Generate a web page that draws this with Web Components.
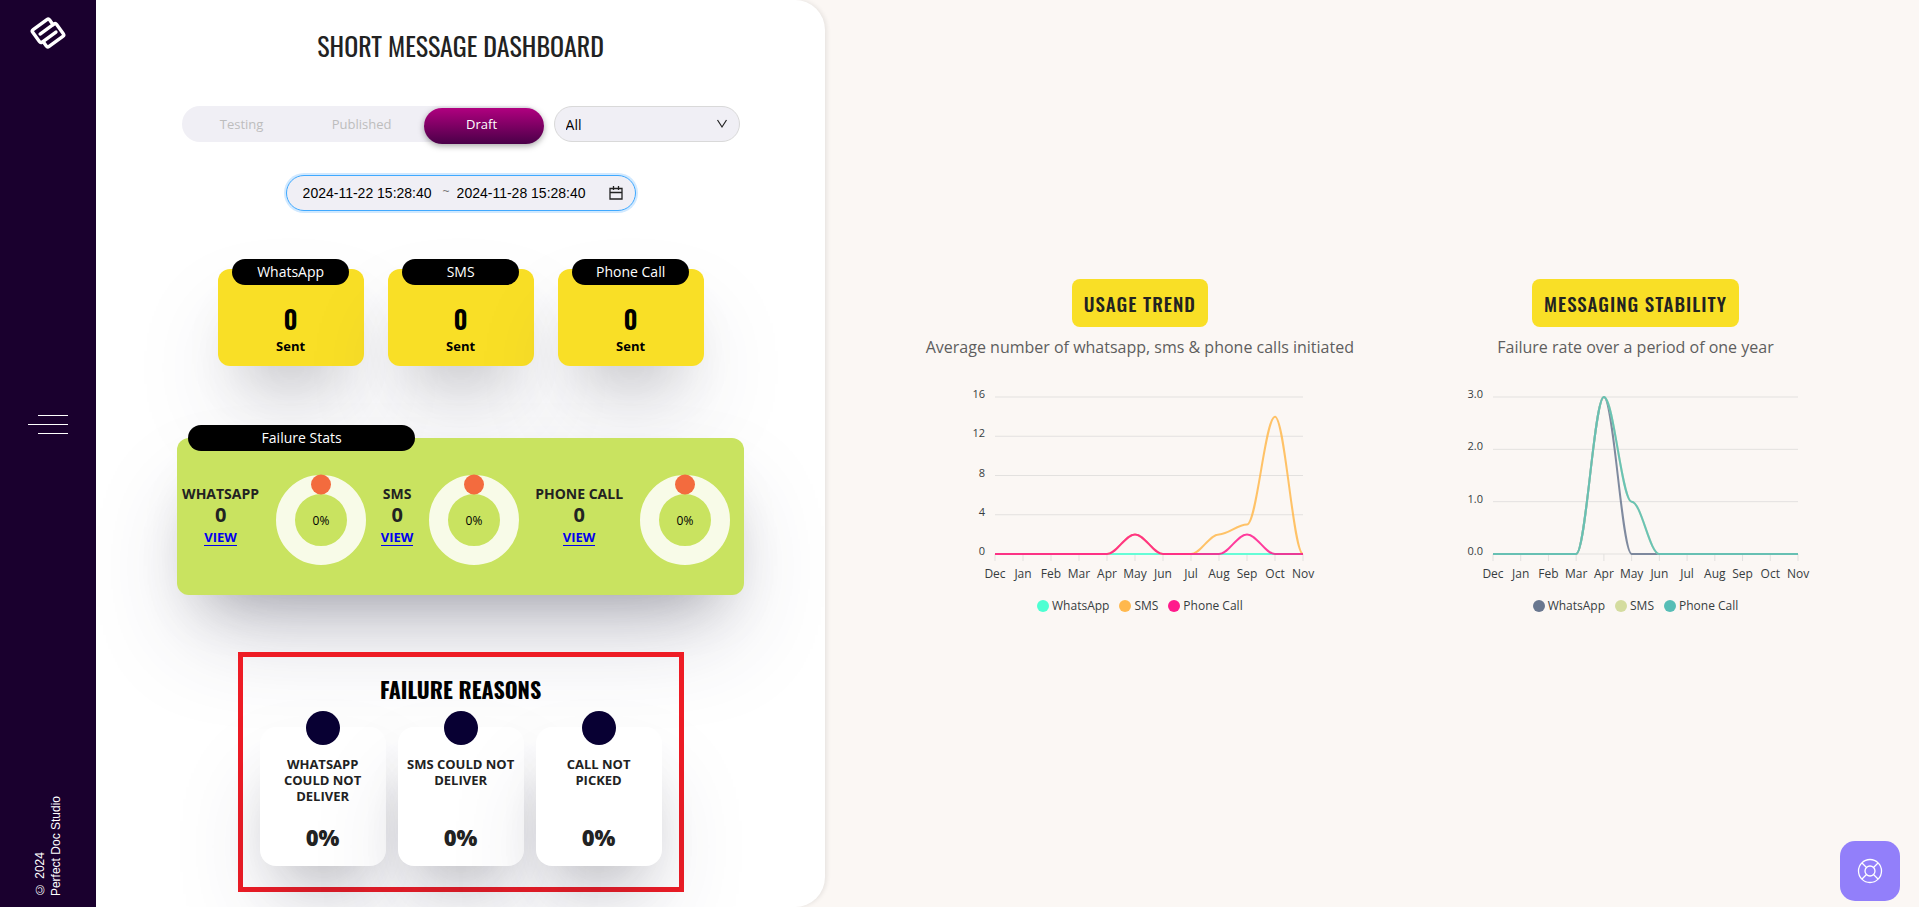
<!DOCTYPE html>
<html lang="en">
<head>
<meta charset="utf-8">
<title>Short Message Dashboard</title>
<style>
  body {
    margin: 0;
    font-family: "Open Sans", "Noto Sans", sans-serif;
    font-size: 14px;
    color: #222;
    background: #fbf7f4;
    --display: Oswald, "Liberation Sans Narrow", "Arial Narrow", "Open Sans", sans-serif;
    --yellow: #f9df26;
    --lime: #c9e360;
    --field: #f0eff5;
    --lift: 0 50px 100px -20px rgba(50, 50, 93, 0.25), 0 30px 60px -30px rgba(0, 0, 0, 0.3);
  }
</style>
</head>
<body>
<message-dashboard>
  <side-rail slot="rail"></side-rail>

  <dash-panel slot="panel" heading="SHORT MESSAGE DASHBOARD">
    <segment-tabs slot="filters" options="Testing,Published,Draft" active="Draft"></segment-tabs>
    <channel-select slot="filters"></channel-select>
    <date-range slot="dates" from="2024-11-22 15:28:40" to="2024-11-28 15:28:40"></date-range>
    <count-card slot="counts" label="WhatsApp">0</count-card>
    <count-card slot="counts" label="SMS">0</count-card>
    <count-card slot="counts" label="Phone Call">0</count-card>
    <failure-stats slot="stats" label="Failure Stats">
      <failure-stat label="WHATSAPP" count="0" percent="0"></failure-stat>
      <failure-stat label="SMS" count="0" percent="0"></failure-stat>
      <failure-stat label="PHONE CALL" count="0" percent="0"></failure-stat>
    </failure-stats>
    <failure-reasons slot="reasons" heading="FAILURE REASONS">
      <reason-card percent="0">WHATSAPP COULD NOT DELIVER</reason-card>
      <reason-card percent="0">SMS COULD NOT DELIVER</reason-card>
      <reason-card percent="0">CALL NOT PICKED</reason-card>
    </failure-reasons>
  </dash-panel>

  <trend-chart slot="charts" chart="usage" heading="USAGE TREND">Average number of whatsapp, sms &amp; phone calls initiated</trend-chart>
  <trend-chart slot="charts" chart="stability" heading="MESSAGING STABILITY">Failure rate over a period of one year</trend-chart>
  <help-button slot="help"></help-button>
</message-dashboard>

<script>
const MONTHS = ['Dec', 'Jan', 'Feb', 'Mar', 'Apr', 'May', 'Jun', 'Jul', 'Aug', 'Sep', 'Oct', 'Nov']

const CHARTS = {
  usage: {
    left: 36,
    ticks: [16, 12, 8, 4, 0],
    digits: 0,
    series: [
      { name: 'WhatsApp',   color: '#4dffd2', data: [0, 0, 0, 0, 0, 0, 0, 0, 0, 0, 0, 0] },
      { name: 'SMS',        color: '#ffb84d', data: [0, 0, 0, 0, 0, 2, 0, 0, 2, 3, 14, 0] },
      { name: 'Phone Call', color: '#ff1a8c', data: [0, 0, 0, 0, 0, 2, 0, 0, 0, 2, 0, 0] },
    ],
  },
  stability: {
    left: 39,
    ticks: [3, 2, 1, 0],
    digits: 1,
    series: [
      { name: 'WhatsApp',   color: '#69778f', data: [0, 0, 0, 0, 3, 0, 0, 0, 0, 0, 0, 0] },
      { name: 'SMS',        color: '#d4dc9f', data: [0, 0, 0, 0, 3, 1, 0, 0, 0, 0, 0, 0] },
      { name: 'Phone Call', color: '#56bdb6', data: [0, 0, 0, 0, 3, 1, 0, 0, 0, 0, 0, 0] },
    ],
  },
}

// Small base class: each element only supplies its template
class BaseElement extends HTMLElement {
  constructor() {
    super()
    this.attachShadow({ mode: 'open' })
  }

  connectedCallback() {
    this.shadowRoot.innerHTML = this.template()
  }

  attr(name) {
    return this.getAttribute(name) || ''
  }
}

customElements.define('message-dashboard', class extends BaseElement {
  template() {
    return `
      <style>
        :host {
          display: grid;
          grid-template-columns: 96px 38% 1fr;
          min-height: 100vh;
        }
        main {
          display: flex;
          align-items: center;
          justify-content: space-evenly;
          padding-right: 2px;
        }
      </style>
      <slot name="rail"></slot>
      <slot name="panel"></slot>
      <main><slot name="charts"></slot></main>
      <slot name="help"></slot>
    `
  }
})

customElements.define('side-rail', class extends BaseElement {
  template() {
    return `
      <style>
        :host {
          display: grid;
          grid-template-rows: 1fr auto 1fr;
          justify-items: center;
          background: #1a002e;
          color: #fff;
        }
        .logo {
          margin-top: 14px;
        }
        button {
          display: flex;
          flex-direction: column;
          align-items: flex-end;
          gap: 8px;
          width: 40px;
          margin-bottom: 58px;
          padding: 0;
          border: 0;
          background: none;
        }
        button span {
          width: 30px;
          height: 1px;
          background: #fff;
        }
        button span:nth-child(2) {
          width: 40px;
        }
        small {
          align-self: end;
          margin-bottom: 11px;
          writing-mode: vertical-rl;
          transform: rotate(180deg);
          font: 12px/16px "Liberation Sans", Arial, sans-serif;
        }
      </style>
      <svg class="logo" width="38" height="38" viewBox="0 0 38 38" fill="none" stroke="#fff" stroke-width="3.4" stroke-linejoin="round" stroke-linecap="round" role="img" aria-label="Perfect Doc Studio">
        <g transform="rotate(-36 19 19)">
          <path d="M12 15.200H28V9.500Q28 7.500 26 7.500H9Q7 7.500 7 9.500V20.900Q7 22.900 9 22.900H26"/>
          <path d="M28 15.200H29Q31 15.200 31 17.200V28.500Q31 30.500 29 30.500H12Q10 30.500 10 28.500V23"/>
        </g>
      </svg>
      <button type="button" aria-label="Menu"><span></span><span></span><span></span></button>
      <small>© 2024<br>Perfect Doc Studio</small>
    `
  }
})

customElements.define('dash-panel', class extends BaseElement {
  template() {
    return `
      <style>
        :host {
          display: flex;
          flex-direction: column;
          align-items: center;
          overflow: hidden;
          background: #fff;
          border-radius: 0 30px 30px 0;
          box-shadow: 2px 0 4px rgba(0, 0, 0, 0.08);
        }
        h1 {
          margin: 28px 0 0;
          font: 400 26px/36px var(--display);
        }
        .row {
          display: flex;
          justify-content: center;
        }
        .filters { gap: 12px; margin-top: 42px; }
        .dates { margin-top: 33px; }
        .counts { gap: 24px; margin-top: 58px; }
        .stats { margin-top: 72px; }
        .reasons { margin: 57px 0 15px; }
      </style>
      <h1>${this.attr('heading')}</h1>
      <div class="row filters"><slot name="filters"></slot></div>
      <div class="row dates"><slot name="dates"></slot></div>
      <div class="row counts"><slot name="counts"></slot></div>
      <div class="row stats"><slot name="stats"></slot></div>
      <div class="row reasons"><slot name="reasons"></slot></div>
    `
  }
})

customElements.define('segment-tabs', class extends BaseElement {
  template() {
    const buttons = this.attr('options').split(',').map((name) => `
      <button type="button" aria-pressed="${name === this.attr('active')}"><span>${name}</span></button>
    `).join('')
    return `
      <style>
        :host {
          display: flex;
          border-radius: 18px;
          background: var(--field);
        }
        button {
          position: relative;
          width: 120px;
          height: 36px;
          padding: 0;
          border: 0;
          background: none;
          color: #bdbdbd;
          font: inherit;
          font-size: 13px;
        }
        span {
          position: relative;
        }
        [aria-pressed="true"] {
          color: #fff;
        }
        /* raised pill behind the active label */
        [aria-pressed="true"]::before {
          content: "";
          position: absolute;
          inset: 2px -2px -2px 2px;
          border-radius: 18px;
          background: linear-gradient(#b0007f, #4a0048);
          box-shadow: 0 2px 6px rgba(0, 0, 0, 0.35);
        }
      </style>
      ${buttons}
    `
  }
})

customElements.define('channel-select', class extends BaseElement {
  template() {
    return `
      <style>
        :host {
          display: grid;
          align-items: center;
        }
        select, svg {
          grid-area: 1 / 1;
        }
        select {
          appearance: none;
          box-sizing: border-box;
          width: 186px;
          height: 36px;
          padding: 0 32px 0 11px;
          border: 1px solid #d9d9d9;
          border-radius: 18px;
          background: var(--field);
          color: #000;
          font: inherit;
        }
        svg {
          justify-self: end;
          margin-right: 12px;
          pointer-events: none;
        }
      </style>
      <select aria-label="Channel">
        <option>All</option>
      </select>
      <svg width="12" height="12" viewBox="0 0 12 12" fill="none" stroke="#222" stroke-width="1.200"><path d="M1.500 2l4.500 7 4.500-7"/></svg>
    `
  }
})

customElements.define('date-range', class extends BaseElement {
  template() {
    return `
      <style>
        :host {
          display: flex;
          align-items: center;
          box-sizing: border-box;
          width: 350px;
          height: 36px;
          padding: 0 12px 0 16px;
          border: 1px solid #40a9ff;
          border-radius: 18px;
          background: var(--field);
          box-shadow: 0 0 0 2px rgba(24, 144, 255, 0.2);
        }
        input {
          width: 136px;
          padding: 0;
          border: 0;
          background: none;
          color: #000;
          font: 14px/20px "Liberation Sans", Arial, sans-serif;
        }
        span {
          width: 18px;
          margin-top: -4px;
          color: #777;
          font: 12px/16px "Liberation Sans", Arial, sans-serif;
          text-indent: 4px;
        }
        svg {
          margin-left: auto;
        }
      </style>
      <input type="text" aria-label="From" value="${this.attr('from')}">
      <span>~</span>
      <input type="text" aria-label="To" value="${this.attr('to')}">
      <svg width="14" height="14" viewBox="0 0 14 14" fill="none" stroke="#222" stroke-width="1.300"><path d="M1 2.500h12v10.500H1zM1 6.500h12M4.500 0v4M9.500 0v4"/></svg>
    `
  }
})

customElements.define('count-card', class extends BaseElement {
  template() {
    return `
      <style>
        :host {
          display: flex;
          flex-direction: column;
          align-items: center;
          width: 146px;
          height: 97px;
          border-radius: 12px;
          background: var(--yellow);
          box-shadow: var(--lift);
          color: #000;
        }
        h2 {
          width: 117px;
          margin: -10px 0 0;
          border-radius: 13px;
          background: #000;
          color: #fff;
          font: 500 14px/26px "Open Sans", sans-serif;
          text-align: center;
        }
        b {
          margin-top: 16px;
          font: 600 26px/36px var(--display);
        }
        p {
          margin: 1px 0 0;
          font-size: 13px;
          font-weight: 700;
          line-height: 16px;
        }
      </style>
      <h2>${this.attr('label')}</h2>
      <b><slot></slot></b>
      <p>Sent</p>
    `
  }
})

customElements.define('failure-stats', class extends BaseElement {
  template() {
    return `
      <style>
        :host {
          box-sizing: border-box;
          width: 567px;
          height: 157px;
          border-radius: 12px;
          background: var(--lime);
          box-shadow: var(--lift);
        }
        h2 {
          width: 227px;
          margin: -13px 0 0 11px;
          border-radius: 13px;
          background: #000;
          color: #fff;
          font: 500 14px/26px "Open Sans", sans-serif;
          text-align: center;
        }
        div {
          display: flex;
          justify-content: space-between;
          padding: 24px 14px 0 4px;
        }
      </style>
      <h2>${this.attr('label')}</h2>
      <div><slot></slot></div>
    `
  }
})

customElements.define('failure-stat', class extends BaseElement {
  template() {
    return `
      <style>
        :host {
          display: flex;
          gap: 16px;
          text-align: center;
          font-weight: 700;
        }
        h3 {
          margin: 8px 0 0;
          padding: 0 1px;
          font-size: 14px;
          line-height: 22px;
        }
        p {
          margin: 0;
          font-size: 20px;
          line-height: 20px;
        }
        a {
          display: inline-block;
          margin-top: 4px;
          border-bottom: 1px solid;
          color: #00e;
          font-size: 13px;
          line-height: 16px;
          text-decoration: none;
        }
        svg {
          overflow: visible;
        }
        text {
          font-size: 12px;
          font-weight: 400;
          text-anchor: middle;
        }
      </style>
      <div>
        <h3>${this.attr('label')}</h3>
        <p>${this.attr('count')}</p>
        <a href="#">VIEW</a>
      </div>
      <svg width="90" height="90" viewBox="0 0 90 90">
        <circle cx="45" cy="45" r="35.500" fill="none" stroke="#f8fbe8" stroke-width="19"/>
        <circle cx="45" cy="9.500" r="10" fill="#f36b3e"/>
        <text x="45" y="50">${this.attr('percent')}%</text>
      </svg>
    `
  }
})

customElements.define('failure-reasons', class extends BaseElement {
  template() {
    return `
      <style>
        :host {
          box-sizing: border-box;
          width: 446px;
          padding: 16px 17px 21px;
          border: 5px solid #ee1c25;
        }
        h2 {
          margin: 0;
          color: #000;
          font: 700 22px/32px var(--display);
          text-align: center;
        }
        div {
          display: flex;
          gap: 12px;
          margin-top: 22px;
        }
      </style>
      <h2>${this.attr('heading')}</h2>
      <div><slot></slot></div>
    `
  }
})

customElements.define('reason-card', class extends BaseElement {
  template() {
    return `
      <style>
        :host {
          display: flex;
          flex: 1;
          flex-direction: column;
          align-items: center;
          height: 139px;
          border-radius: 16px;
          background: #fff;
          box-shadow: var(--lift);
          font-weight: 700;
          text-align: center;
        }
        i {
          width: 34px;
          height: 34px;
          margin-top: -16px;
          border-radius: 50%;
          background: #080033;
        }
        p {
          margin: 11px 8px 0;
          font-size: 13px;
          line-height: 16px;
        }
        b {
          margin: auto 0 15px;
          font-size: 22px;
          font-weight: 800;
          line-height: 28px;
        }
      </style>
      <i></i>
      <p><slot></slot></p>
      <b>${this.attr('percent')}%</b>
    `
  }
})

customElements.define('trend-chart', class extends BaseElement {
  // Flat tangents at every point, handles 35% of the step long
  line(points) {
    return points.map(([x, y], i) => {
      if (i === 0) return `M${x} ${y}`
      const [px, py] = points[i - 1]
      const reach = (x - px) * 0.35
      return `C${px + reach} ${py} ${x - reach} ${y} ${x} ${y}`
    }).join('')
  }

  template() {
    const { left, ticks, digits, series } = CHARTS[this.attr('chart')]
    const right = 344
    const top = 12
    const bottom = 169
    const xAt = (i) => left + i * (right - left) / (MONTHS.length - 1)
    const yAt = (v) => bottom - v * (bottom - top) / ticks[0]

    const grid = ticks.map((v) => `
      <path class="grid" d="M${left} ${yAt(v)}H${right}"/>
      <text class="y" x="${left - 10}" y="${yAt(v) + 1}">${v.toFixed(digits)}</text>
    `).join('')
    const months = MONTHS.map((m, i) => `
      <path class="grid" d="M${xAt(i)} ${bottom}v7"/>
      <text x="${xAt(i)}" y="193">${m}</text>
    `).join('')
    const lines = series.map((s) => `
      <path class="line" stroke="${s.color}" d="${this.line(s.data.map((v, i) => [xAt(i), yAt(v)]))}"/>
    `).join('')
    const legend = series.map((s) => `<li style="--dot: ${s.color}">${s.name}</li>`).join('')

    return `
      <style>
        :host {
          display: flex;
          flex-direction: column;
          align-items: center;
        }
        h2 {
          margin: 0;
          padding: 0 12px;
          border-radius: 8px;
          background: var(--yellow);
          font: 500 19px/48px var(--display);
          letter-spacing: 1px;
        }
        p {
          margin: 7px 0 0;
          color: #5e5e5e;
          font-size: 16px;
          line-height: 26px;
        }
        svg {
          margin-top: 25px;
          overflow: visible;
        }
        .grid {
          stroke: #e3e1df;
        }
        .line {
          fill: none;
          stroke-width: 2;
          stroke-opacity: 0.85;
        }
        text {
          fill: #373d3f;
          font-size: 12px;
          text-anchor: middle;
        }
        .y {
          font-size: 11px;
          text-anchor: end;
        }
        ul {
          display: flex;
          gap: 10px;
          margin: 5px 0 15px;
          padding: 0;
          list-style: none;
          color: #373d3f;
          font-size: 12px;
          line-height: 16px;
        }
        li {
          display: flex;
          align-items: center;
          gap: 3px;
        }
        li::before {
          content: "";
          width: 12px;
          height: 12px;
          border-radius: 50%;
          background: var(--dot);
        }
      </style>
      <h2>${this.attr('heading')}</h2>
      <p><slot></slot></p>
      <svg width="362" height="208" viewBox="0 0 362 208">${grid}${months}${lines}</svg>
      <ul>${legend}</ul>
    `
  }
})

customElements.define('help-button', class extends BaseElement {
  template() {
    return `
      <style>
        :host {
          position: fixed;
          right: 19px;
          bottom: 6px;
        }
        button {
          display: grid;
          place-items: center;
          width: 60px;
          height: 60px;
          padding: 0;
          border: 0;
          border-radius: 15px;
          background: #927ffa;
        }
      </style>
      <button type="button" aria-label="Help">
        <svg width="26" height="26" viewBox="0 0 26 26" fill="none" stroke="#fff" stroke-width="1.300">
          <circle cx="13" cy="13" r="11.500"/>
          <circle cx="13" cy="13" r="5"/>
          <path d="M5 5l4.500 4.500M21 5l-4.500 4.500M5 21l4.500-4.500M21 21l-4.500-4.500"/>
        </svg>
      </button>
    `
  }
})
</script>
</body>
</html>
